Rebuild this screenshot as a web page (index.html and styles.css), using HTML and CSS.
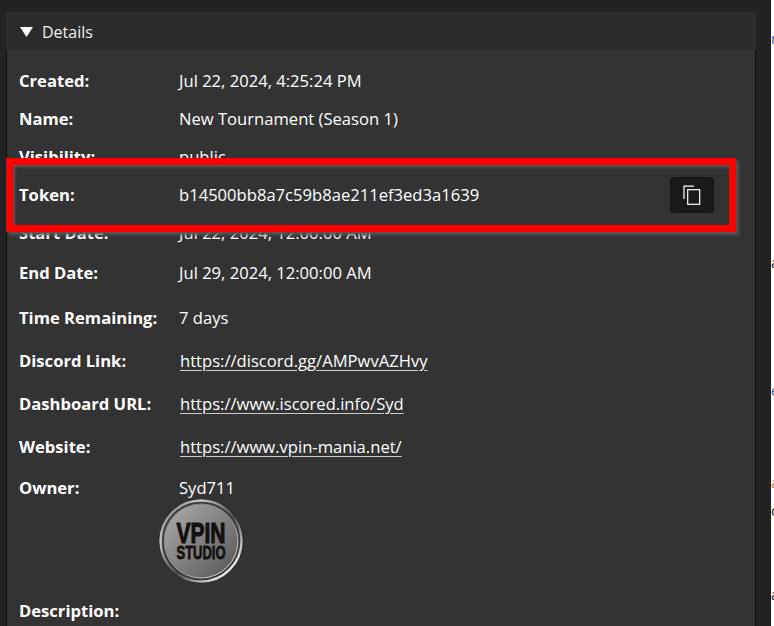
FILE: index.html
```html
<!DOCTYPE html>
<html lang="en">
<head>
    <meta charset="UTF-8">
    <title>Tournament Details</title>
    <link rel="stylesheet" href="styles.css">
</head>
<body>

    <div class="app">
        <div class="details">
            <div class="details-header">
                <svg class="arrow" width="13" height="10" viewBox="0 0 13 10"><path d="M0 0H13L6.5 10Z" fill="#fff"/></svg>
                <span>Details</span>
            </div>

            <div class="details-body">
                <div class="row"><div class="label">Created:</div><div class="value">Jul 22, 2024, 4:25:24 PM</div></div>
                <div class="row"><div class="label">Name:</div><div class="value">New Tournament (Season 1)</div></div>
                <div class="row"><div class="label">Visibility:</div><div class="value">public</div></div>

                <!-- Token row, marked in red -->
                <div class="row token-row">
                    <div class="label">Token:</div>
                    <div class="value">b14500bb8a7c59b8ae211ef3ed3a1639</div>
                    <button class="copy-btn">
                        <svg width="18" height="20" viewBox="0 0 18 20" fill="none" stroke="#fff" stroke-width="1.2">
                            <path d="M1 14V1.2H11"/>
                            <rect x="4.7" y="4.7" width="12" height="14.6"/>
                        </svg>
                    </button>
                </div>

                <div class="row"><div class="label">Start Date:</div><div class="value">Jul 22, 2024, 12:00:00 AM</div></div>
                <div class="row end-row"><div class="label">End Date:</div><div class="value">Jul 29, 2024, 12:00:00 AM</div></div>
                <div class="row time-row"><div class="label">Time Remaining:</div><div class="value">7 days</div></div>
                <div class="row link-row"><div class="label">Discord Link:</div><a class="value link" href="#">https://discord.gg/AMPwvAZHvy</a></div>
                <div class="row link-row"><div class="label">Dashboard URL:</div><a class="value link" href="#">https://www.iscored.info/Syd</a></div>
                <div class="row link-row"><div class="label">Website:</div><a class="value link" href="#">https://www.vpin-mania.net/</a></div>
                <div class="row owner-row"><div class="label">Owner:</div><div class="value">Syd711</div></div>

                <svg class="logo" width="86" height="86" viewBox="0 0 86 86">
                    <defs>
                        <linearGradient id="ring" x1="0" y1="0" x2="1" y2="1">
                            <stop offset="0" stop-color="#5e5e5e"/>
                            <stop offset="0.25" stop-color="#c8c8c8"/>
                            <stop offset="0.55" stop-color="#4a4a4a"/>
                            <stop offset="0.85" stop-color="#e8e8e8"/>
                            <stop offset="1" stop-color="#666"/>
                        </linearGradient>
                        <linearGradient id="edge" x1="0" y1="0" x2="1" y2="1">
                            <stop offset="0" stop-color="#777"/>
                            <stop offset="0.6" stop-color="#999"/>
                            <stop offset="1" stop-color="#fff"/>
                        </linearGradient>
                        <linearGradient id="face" x1="0" y1="0" x2="1" y2="1">
                            <stop offset="0" stop-color="#b0aeac"/>
                            <stop offset="1" stop-color="#555453"/>
                        </linearGradient>
                    </defs>
                    <circle cx="43" cy="43" r="42.5" fill="#262626"/>
                    <circle cx="43" cy="43" r="40.5" fill="#3a3a3a" stroke="url(#ring)" stroke-width="2.4"/>
                    <circle cx="43" cy="43" r="37" fill="url(#face)" stroke="url(#edge)" stroke-width="1"/>
                    <text class="logo-big" x="43" y="45" text-anchor="middle" textLength="49" lengthAdjust="spacingAndGlyphs">VPIN</text>
                    <text class="logo-small" x="43" y="60.5" text-anchor="middle" textLength="49" lengthAdjust="spacingAndGlyphs">STUDIO</text>
                </svg>

                <div class="row description-row"><div class="label">Description:</div></div>
            </div>
        </div>

        <!-- Page behind the dark window, only its edge shows -->
        <div class="behind">
            <span class="blue first">n</span>
            <span class="second">a</span>
            <span class="blue third">e</span>
            <span class="orange fourth">a</span>
            <span class="fifth">c</span>
            <span class="sixth">a</span>
        </div>
    </div>

</body>
</html>
```

FILE: styles.css
```css
html, body {
    margin: 0;
    padding: 0;
    height: 100%;
    overflow: hidden;
}
body {
    font-family: "Open Sans", "Noto Sans", sans-serif;
    font-size: 16.6px;
    color: #fff;
    background-color: #222;
}
.app {
    display: flex;
    height: 626px;
    padding-left: 6px;
    box-sizing: border-box;
}
.details {
    width: 750px;
    margin-top: 12px;
    flex-shrink: 0;
    height: 614px;
    overflow: hidden;
}
.details-header {
    display: flex;
    align-items: center;
    gap: 9px;
    height: 38px;
    padding-left: 13px;
    box-sizing: border-box;
    background-color: #2b2b2b;
    border-top: 1px solid #303030;
    border-right: 1px solid #303030;
    border-left: 1px solid #303030;
    font-size: 16px;
    color: #f0f0f0;
}
.details-body {
    height: 576px;
    padding: 12px 12px 0 12px;
    background-color: #333;
    border-left: 1px solid #0a0a0a;
    border-right: 1px solid #0a0a0a;
    box-sizing: border-box;
}
.row {
    display: flex;
    align-items: center;
    height: 38px;
}
.label, .value {
    padding-bottom: 2px;
}
.label {
    width: 160px;
    flex-shrink: 0;
    font-weight: 700;
}
.link {
    margin-left: 1px;
    color: #fff;
    text-decoration: underline;
    text-decoration-color: #ccc;
    text-underline-offset: 3px;
}

/* red box */
.token-row {
    position: relative;
    height: 74px;
    margin: -18px 7px -18px -13px;
    padding: 0 15px 0 6px;
    border: 7px solid #f00;
    box-sizing: border-box;
    background-color: #333;
    box-shadow: 3px 3px 3px #555, inset 2px 2px 3px #5a5a5a;
}
.copy-btn {
    display: flex;
    align-items: center;
    justify-content: center;
    width: 44px;
    height: 36px;
    margin-left: auto;
    padding: 0;
    background-color: #1a1a1a;
    border: 1px solid #111;
    border-radius: 4px;
}
.end-row {
    margin-top: 2px;
}
.time-row {
    margin-top: 7px;
}
.link-row {
    margin-top: 5px;
}
.owner-row {
    margin-top: 3px;
}
.logo {
    display: block;
    margin: -9px 0 0 139px;
}
.logo-big {
    font-family: "Liberation Sans", sans-serif;
    font-weight: 700;
    font-size: 30px;
    fill: #111;
    stroke: #111;
    stroke-width: 1.2;
}
.logo-small {
    font-family: "Liberation Sans", sans-serif;
    font-weight: 700;
    font-size: 19px;
    fill: #111;
    stroke: #111;
    stroke-width: 0.8;
}
.description-row {
    margin-top: 8px;
}
.behind {
    display: flex;
    flex-direction: column;
    align-items: flex-start;
    width: 3px;
    height: 626px;
    margin-left: 15px;
    overflow: hidden;
    background-color: #fff;
    font-size: 14px;
    line-height: 12px;
    color: #222;
}
.behind .blue {
    color: #1a5fa8;
}
.behind .orange {
    color: #c9701e;
}
.first { margin-top: 33px; }
.second { margin-top: 212px; }
.third { margin-top: 116px; }
.fourth { margin-top: 80px; }
.fifth { margin-top: 16px; }
.sixth { margin-top: 72px; }
```
